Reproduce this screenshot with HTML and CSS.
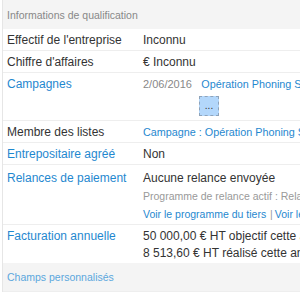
FILE: index.html
```html
<!DOCTYPE html>
<html>
<head>
    <title>Informations de qualification</title>
    <link rel="stylesheet" href="styles.css">
</head>
<body>
    <div class="panel">
        <div class="panel-heading">Informations de qualification</div>
        <table class="info-table">
            <tr>
                <th>Effectif de l'entreprise</th>
                <td>Inconnu</td>
            </tr>
            <tr>
                <th>Chiffre d'affaires</th>
                <td>€ Inconnu</td>
            </tr>
            <tr>
                <th><a href="#">Campagnes</a></th>
                <td>
                    <div class="campaign">
                        <span class="date">2/06/2016</span>
                        <a href="#">Opération Phoning Sur les nouveaux clients</a>
                    </div>
                    <button type="button" class="more">...</button>
                </td>
            </tr>
            <tr>
                <th>Membre des listes</th>
                <td class="small-link"><a href="#">Campagne : Opération Phoning Sur les nouveaux clients</a></td>
            </tr>
            <tr>
                <th><a href="#">Entrepositaire agréé</a></th>
                <td>Non</td>
            </tr>
            <tr class="reminders">
                <th><a href="#">Relances de paiement</a></th>
                <td>
                    <div class="first">Aucune relance envoyée</div>
                    <div class="muted">Programme de relance actif : Relance standard</div>
                    <div class="links"><a href="#">Voir le programme du tiers</a> <span class="sep">|</span><a href="#">Voir le programme</a></div>
                </td>
            </tr>
            <tr>
                <th><a href="#">Facturation annuelle</a></th>
                <td>
                    <div>50 000,00 € HT objectif cette année</div>
                    <div>8 513,60 € HT réalisé cette année</div>
                </td>
            </tr>
        </table>
        <div class="panel-heading sub"><a href="#">Champs personnalisés</a></div>
    </div>
</body>
</html>
```

FILE: styles.css
```css
body {
    margin: 0;
    font-family: "Liberation Sans", Arial, sans-serif;
    font-size: 12px;
    color: #333;
    background: #fff;
    overflow: hidden;
}

a {
    color: #1f88cf;
    text-decoration: none;
}

.panel {
    margin-left: 2px;
    border-left: 1px solid #e6e6e6;
    width: 420px;
}

.panel-heading {
    background: #f4f4f4;
    color: #888;
    font-size: 10.5px;
    padding: 0 4px;
    height: 29px;
    line-height: 30px;
}

.panel-heading.sub {
    height: 28px;
    line-height: 29px;
    border-bottom: 1px solid #eee;
}

.panel-heading.sub a {
    color: #5ba7dd;
}

.info-table {
    width: 100%;
    border-collapse: collapse;
}

.info-table th,
.info-table td {
    text-align: left;
    font-weight: normal;
    vertical-align: top;
    white-space: nowrap;
    border-top: 1px solid #eee;
    padding: 3px 4px 1px 4px;
    line-height: 17px;
}

.info-table tr:first-child th,
.info-table tr:first-child td {
    border-top: none;
}

.info-table th {
    width: 128px;
}

.reminders th,
.reminders .first {
    padding-top: 2px;
}

.reminders th {
    padding-top: 5px;
}

.date {
    color: #888;
    font-size: 11px;
    margin-right: 6px;
}

.campaign a,
.small-link a {
    font-size: 10.8px;
}

.more {
    display: block;
    margin: 3px 0 3px 56px;
    width: 20px;
    height: 20px;
    padding: 0;
    background: #b3d7fb;
    border: 1px dashed #8ea3ba;
    font-size: 10px;
    line-height: 14px;
    color: #333;
}

.muted {
    color: #999;
    font-size: 10.5px;
    margin-top: 1px;
}

.links {
    font-size: 10.5px;
    margin-top: 1px;
}

.sep {
    color: #999;
    margin: 0 2px 0 1px;
}
```
